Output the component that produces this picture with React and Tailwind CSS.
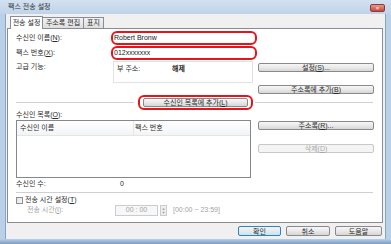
import React from "react";

const font = "font-['Liberation_Sans','Noto_Sans_CJK_KR',sans-serif]";

function U({ children }) {
  return <span className="underline">{children}</span>;
}

function Btn({ children, disabled, className = "" }) {
  return (
    <div
      className={`flex items-center justify-center rounded-[2px] border text-[7px] leading-none ${
        disabled
          ? "border-[#c6cacd] bg-[#f4f4f4] text-[#a8a8a8]"
          : "border-[#8a8a8a] bg-gradient-to-b from-[#f6f6f6] via-[#e9e9e9] to-[#d6d6d6] text-[#2a2a2a]"
      } ${className}`}
    >
      {children}
    </div>
  );
}

function RedBox({ children, className = "" }) {
  return (
    <div className={`rounded-[6px] border-2 border-[#e8141c] ${className}`}>{children}</div>
  );
}

export default function App() {
  return (
    <div className={`w-[391px] h-[244px] overflow-hidden bg-[#b9d0e9] ${font} text-[7px] text-[#2b2b2b]`}>
      {/* title bar */}
      <div className="h-[14px] flex items-center justify-between pl-[8px] pr-[6px] bg-gradient-to-b from-[#d3e1f0] to-[#bfd3e9]">
        <span className="text-[7px] text-[#333]">팩스 전송 설정</span>
        <div className="w-[15px] h-[8px] mt-[2px] rounded-[2px] border border-[#8d3b36] bg-gradient-to-b from-[#e59a8c] to-[#c4473b] flex items-center justify-center text-white text-[6px] leading-none">
          ×
        </div>
      </div>

      {/* client area */}
      <div className="mx-[5px] h-[225px] bg-[#f0f0f0] border-l border-r border-[#8aa3bf] pl-[1px] pr-[2px] pt-[1px] flex flex-col">
        {/* tabs */}
        <div className="flex items-end h-[13px] pl-[3px]">
          <div className="h-[13px] w-[33px] bg-white border border-b-0 border-[#898c95] flex items-center justify-center relative z-10 -mb-[1px]">
            전송 설정
          </div>
          <div className="h-[11px] w-[41px] bg-gradient-to-b from-[#f2f2f2] to-[#dedede] border border-l-0 border-b-0 border-[#898c95] flex items-center justify-center">
            주소록 편집
          </div>
          <div className="h-[11px] w-[20px] bg-gradient-to-b from-[#f2f2f2] to-[#dedede] border border-l-0 border-b-0 border-[#898c95] flex items-center justify-center">
            표지
          </div>
        </div>

        {/* panel */}
        <div className="h-[195px] bg-white border border-[#898c95] pl-[8px] flex flex-col">
          <div className="flex items-start">
            {/* left column */}
            <div className="w-[241px] flex flex-col">
              <div className="mt-[2px] h-[14px] flex items-center">
                <span className="w-[95px]">
                  수신인 이름(<U>N</U>):
                </span>
                <RedBox className="w-[146px] h-[14px] flex items-center pl-[1px] font-['Liberation_Sans',sans-serif] text-[#222]">
                  Robert Bronw
                </RedBox>
              </div>
              <div className="mt-[1px] h-[14px] flex items-center">
                <span className="w-[95px]">
                  팩스 번호(<U>X</U>):
                </span>
                <RedBox className="w-[146px] h-[14px] flex items-center pl-[1px] font-['Liberation_Sans',sans-serif] text-[#222]">
                  012xxxxxxx
                </RedBox>
              </div>
              <div className="mt-[1px] h-[23px] flex items-start">
                <span className="w-[97px] h-[12px] flex items-center">고급 기능:</span>
                <div className="w-[140px] h-[22px] border border-[#dfe3e8] flex items-start pt-[2px] pl-[3px]">
                  <span className="w-[55px]">부 주소:</span>
                  <span className="font-bold">해제</span>
                </div>
              </div>
              <div className="mt-[11px] h-[15px] flex items-center">
                <div className="w-[118px] h-px bg-[#d0d0d0]" />
                <RedBox className="ml-[4px] w-[115px] h-[15px] flex items-center justify-center">
                  <Btn className="w-[105px] h-[9px]">
                    수신인 목록에 추가(<U>L</U>)
                  </Btn>
                </RedBox>
              </div>
              <div className="h-[8px] flex items-center mt-[1px]">
                수신인 목록(<U>O</U>):
              </div>
              <div className="mt-[1px] w-[235px] h-[58px] border border-[#828790] flex flex-col">
                <div className="h-[15px] flex items-stretch bg-gradient-to-b from-white to-[#f3f4f6] border-b border-[#e5e5e5]">
                  <div className="w-[117px] pl-[3px] flex items-center border-r border-[#e5e5e5]">수신인 이름</div>
                  <div className="pl-[1px] flex items-center">팩스 번호</div>
                </div>
              </div>
            </div>

            {/* right column */}
            <div className="ml-[1px] w-[116px] flex flex-col">
              <Btn className="mt-[34px] h-[9px]">
                설정(<U>S</U>)...
              </Btn>
              <Btn className="mt-[13px] h-[9px]">
                주소록에 추가(<U>B</U>)
              </Btn>
              <div className="mt-[8px] -ml-[3px] w-[118px] h-px bg-[#d0d0d0]" />
              <Btn className="mt-[18px] h-[9px]">
                주소록(<U>R</U>)...
              </Btn>
              <Btn disabled className="mt-[14px] h-[9px]">
                삭제(<U>D</U>)
              </Btn>
            </div>
          </div>

          <div className="mt-[2px] h-[8px] flex items-center">
            <span className="w-[104px]">수신인 수:</span>
            <span>0</span>
          </div>
          <div className="mt-[4px] w-[357px] h-px bg-[#d0d0d0]" />
          <div className="mt-[3px] h-[8px] flex items-center">
            <div className="w-[7px] h-[7px] border border-[#8f8f8f] bg-gradient-to-br from-[#e2e2e2] to-[#f8f8f8]" />
            <span className="ml-[2px]">
              전송 시간 설정(<U>T</U>)
            </span>
          </div>
          <div className="mt-[1px] h-[11px] flex items-center text-[#a3a3a3]">
            <span className="ml-[11px] w-[88px]">
              전송 시간(<U>I</U>):
            </span>
            <div className="w-[43px] h-[11px] border border-[#c9ccd0] bg-[#f7f7f7] flex items-center justify-center">
              00 : 00
            </div>
            <div className="ml-[2px] w-[7px] h-[11px] border border-[#c9ccd0] bg-[#efefef] flex flex-col items-center justify-center text-[4px] leading-none">
              <span>▲</span>
              <span>▼</span>
            </div>
            <span className="ml-[6px]">[00:00 ~ 23:59]</span>
          </div>
        </div>

        {/* dialog buttons */}
        <div className="mt-[3px] flex justify-end gap-[5px] pr-[1px]">
          <Btn className="w-[43px] h-[10px] !border-[#3c7fb1] !from-[#eaf6fd] !to-[#bee6fd]">확인</Btn>
          <Btn className="w-[44px] h-[10px]">취소</Btn>
          <Btn className="w-[47px] h-[10px]">도움말</Btn>
        </div>
      </div>
      <div className="h-[5px] bg-gradient-to-b from-[#b9d0e9] to-[#7d9bbd]" />
    </div>
  );
}
